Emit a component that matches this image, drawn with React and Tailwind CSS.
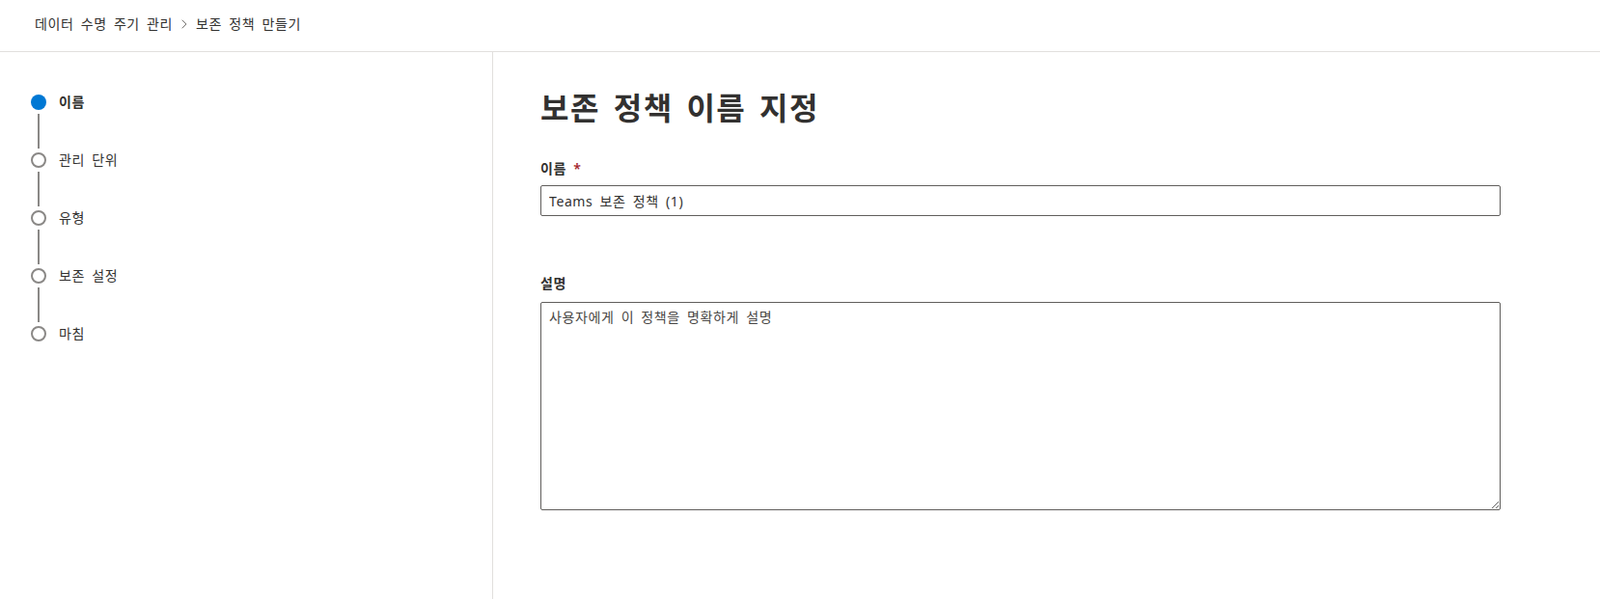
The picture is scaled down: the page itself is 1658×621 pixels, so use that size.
import { ChevronRight } from 'lucide-react';

const steps = ['이름', '관리 단위', '유형', '보존 설정', '마침'];

function Step({ label, active, last }) {
  return (
    <div>
      <div className="flex items-center h-4">
        {active ? (
          <div className="w-4 h-4 rounded-full bg-[#0078d4]" />
        ) : (
          <div className="w-4 h-4 rounded-full border-2 border-[#8a8886] bg-white" />
        )}
        <span className={`ml-[13px] text-sm leading-5 text-[#323130] ${active ? 'font-semibold' : ''}`}>{label}</span>
      </div>
      {!last && <div className="ml-[7px] my-1 w-[2px] h-9 bg-[#8a8886]" />}
    </div>
  );
}

export default function App() {
  return (
    <div className="min-h-screen bg-white text-[#323130] font-['Noto_Sans','Noto_Sans_CJK_KR',sans-serif] tracking-[0.6px] [word-spacing:3px]">
      <div className="h-[54px] border-b border-[#e1dfdd] flex items-center pl-9 pb-[4px] text-sm">
        <span>데이터 수명 주기 관리</span>
        <ChevronRight size={16} strokeWidth={1.3} className="mx-[4px] text-[#605e5c]" />
        <span>보존 정책 만들기</span>
      </div>
      <div className="flex h-[567px]">
        <div className="w-[511px] border-r border-[#e1dfdd] pl-8 pt-[44px]">
          {steps.map((s, i) => (
            <Step key={s} label={s} active={i === 0} last={i === steps.length - 1} />
          ))}
        </div>
        <div className="flex-1 pl-[49px] pr-[103px] pt-[38px]">
          <h1 className="text-[32px] leading-10 font-bold tracking-[1.5px] [word-spacing:4px]">보존 정책 이름 지정</h1>
          <label className="block mt-[33px] text-sm leading-5 font-semibold">
            이름 <span className="text-[#a4262c]">*</span>
          </label>
          <input
            defaultValue="Teams 보존 정책 (1)"
            className="mt-[7px] w-full h-[32px] border border-[#605e5c] rounded-[2px] px-2 text-sm outline-none [word-spacing:3px]"
          />
          <label className="block mt-[60px] text-sm leading-5 font-semibold">설명</label>
          <textarea
            placeholder="사용자에게 이 정책을 명확하게 설명"
            className="block mt-[9px] w-full h-[216px] border border-[#605e5c] rounded-[2px] px-2 py-[5px] text-sm leading-5 outline-none [word-spacing:3px] placeholder:text-[#484644]"
          />
        </div>
      </div>
    </div>
  );
}
